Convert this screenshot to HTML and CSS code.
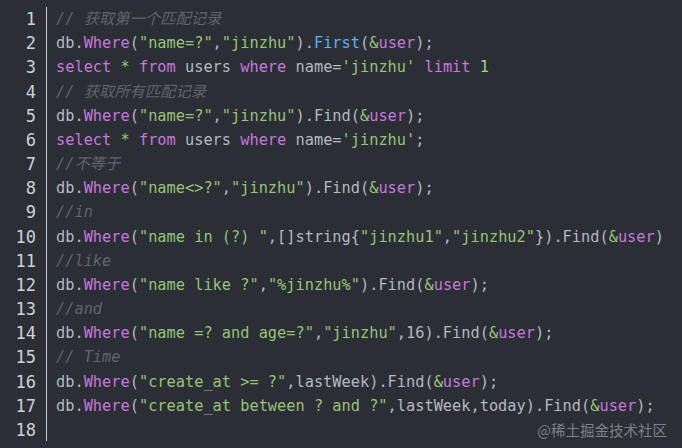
FILE: index.html
```html
<!DOCTYPE html>
<html>
<head>
<meta charset="utf-8">
<link rel="stylesheet" href="styles.css">
</head>
<body>
<div class="editor">
  <div class="gutter">
    <div class="ln">1</div><div class="ln">2</div><div class="ln">3</div><div class="ln">4</div><div class="ln">5</div><div class="ln">6</div><div class="ln">7</div><div class="ln">8</div><div class="ln">9</div><div class="ln">10</div><div class="ln">11</div><div class="ln">12</div><div class="ln">13</div><div class="ln">14</div><div class="ln">15</div><div class="ln">16</div><div class="ln">17</div><div class="ln">18</div>
  </div>
  <div class="code">
    <div class="line"><span class="c">// 获取第一个匹配记录</span></div>
    <div class="line">db.<span class="k">Where</span>(<span class="s">"name=?"</span>,<span class="s">"jinzhu"</span>).<span class="f">First</span>(<span class="a">&amp;</span><span class="k">user</span>);</div>
    <div class="line"><span class="k">select</span> <span class="s">*</span> <span class="k">from</span> users <span class="k">where</span> name=<span class="s">'jinzhu'</span> <span class="k">limit</span> <span class="n">1</span></div>
    <div class="line"><span class="c">// 获取所有匹配记录</span></div>
    <div class="line">db.<span class="k">Where</span>(<span class="s">"name=?"</span>,<span class="s">"jinzhu"</span>).Find(<span class="a">&amp;</span><span class="k">user</span>);</div>
    <div class="line"><span class="k">select</span> <span class="s">*</span> <span class="k">from</span> users <span class="k">where</span> name=<span class="s">'jinzhu'</span>;</div>
    <div class="line"><span class="c">//不等于</span></div>
    <div class="line">db.<span class="k">Where</span>(<span class="s">"name&lt;&gt;?"</span>,<span class="s">"jinzhu"</span>).Find(<span class="a">&amp;</span><span class="k">user</span>);</div>
    <div class="line"><span class="c">//in</span></div>
    <div class="line">db.<span class="k">Where</span>(<span class="s">"name in (?) "</span>,[]string{<span class="s">"jinzhu1"</span>,<span class="s">"jinzhu2"</span>}).Find(<span class="a">&amp;</span><span class="k">user</span>)</div>
    <div class="line"><span class="c">//like</span></div>
    <div class="line">db.<span class="k">Where</span>(<span class="s">"name like ?"</span>,<span class="s">"%jinzhu%"</span>).Find(<span class="a">&amp;</span><span class="k">user</span>);</div>
    <div class="line"><span class="c">//and</span></div>
    <div class="line">db.<span class="k">Where</span>(<span class="s">"name =? and age=?"</span>,<span class="s">"jinzhu"</span>,16).Find(<span class="a">&amp;</span><span class="k">user</span>);</div>
    <div class="line"><span class="c">// Time</span></div>
    <div class="line">db.<span class="k">Where</span>(<span class="s">"create_at &gt;= ?"</span>,lastWeek).Find(<span class="a">&amp;</span><span class="k">user</span>);</div>
    <div class="line">db.<span class="k">Where</span>(<span class="s">"create_at between ? and ?"</span>,lastWeek,today).Find(<span class="a">&amp;</span><span class="k">user</span>);</div>
    <div class="line"></div>
  </div>
  <div class="mark">@稀土掘金技术社区</div>
</div>
</body>
</html>
```
FILE: styles.css
```css
html, body {
  margin: 0;
  padding: 0;
  background: #2b2e35;
}
.editor {
  position: relative;
  width: 682px;
  height: 448px;
  overflow: hidden;
  display: flex;
  align-items: flex-start;
  padding-top: 7px;
  box-sizing: border-box;
  font-family: "DejaVu Sans Mono", "Noto Sans CJK SC", monospace;
  font-size: 15.3px;
  line-height: 24.18px;
  color: #b4b9c2;
}
.gutter {
  width: 47px;
  box-sizing: border-box;
  padding-right: 10px;
  border-right: 1px solid #c8cbd0;
  height: 434px;
  text-align: right;
  flex: none;
}
.ln {
  height: 24.18px;
  font-size: 17px;
  color: #ced1d6;
}
.code {
  padding-left: 9px;
  flex: 1;
  min-width: 0;
}
.line {
  height: 24.18px;
  white-space: pre;
}
.c { color: #5f646e; font-style: italic; }
.k { color: #c678dd; }
.s { color: #98c379; }
.f { color: #61afef; }
.a { color: #98c379; }
.n { color: #a6d189; }
.mark {
  position: absolute;
  right: 15px;
  bottom: 9px;
  font-family: "Noto Sans CJK SC", "Noto Sans", sans-serif;
  font-size: 14.5px;
  line-height: 18px;
  color: #7d8189;
}
```
